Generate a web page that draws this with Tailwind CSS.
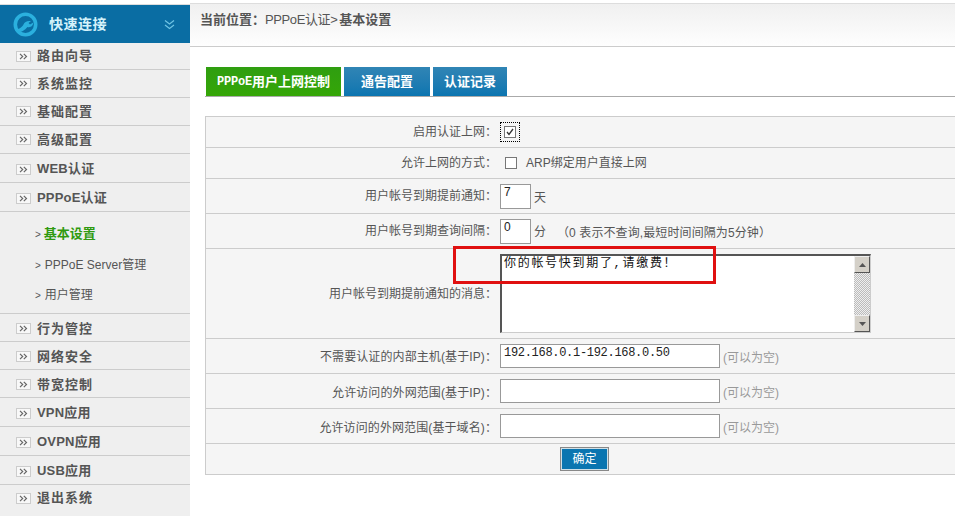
<!DOCTYPE html>
<html lang="zh"><head><meta charset="utf-8"><title>PPPoE</title>
<script src="https://cdn.jsdelivr.net/npm/@tailwindcss/browser@4"></script></head>
<body class="relative w-[955px] h-[516px] overflow-hidden bg-white text-[12px] text-[#555] font-['Liberation_Sans','Noto_Sans_CJK_SC',sans-serif]">
<div class="flex h-[516px]">
<aside class="w-[190px] shrink-0 flex flex-col">
  <div class="h-[5px] bg-white border-b border-[#ddd]"></div>
  <div class="h-[38px] bg-[#0a6da3] flex items-center pl-[13px] pr-[15px]">
    <svg width="25" height="25" viewBox="0 0 25 25" class="shrink-0"><circle cx="12.5" cy="12.5" r="10.2" fill="none" stroke="#2bb0de" stroke-width="3.6"/><path d="M2 18 C7 17 9 15 10.5 12.5 C11.5 10 14 8.5 18 9 L15.5 11 L17 12.5 L20 10.8 C20.5 13.5 17.5 16 14.5 15 C12 18 8 20.5 5 20.5Z" fill="#2bb0de"/></svg>
    <span class="ml-[11px] text-[14px] font-bold text-[#d5f3fb] tracking-[0.5px]">快速连接</span>
    <svg width="11" height="11" viewBox="0 0 11 11" class="ml-auto" fill="none" stroke="#6fc4e4" stroke-width="1.2"><path d="M1 1.5 L5.5 5 L10 1.5M1 6 L5.5 9.5 L10 6"/></svg>
  </div>
  <nav class="flex-1 bg-[#efefef] flex flex-col text-[13px] font-bold text-[#555]">
    <div class="h-[27px] flex items-center border-b border-[#ccc] pl-[16px] gap-[6px]"><svg width="15" height="11" viewBox="0 0 15 11"><rect x=".5" y=".5" width="14" height="10" fill="#f8f8f8" stroke="#ccc"/><path d="M4 2.8 L6.7 5.5 L4 8.2M7.8 2.8 L10.5 5.5 L7.8 8.2" fill="none" stroke="#666" stroke-width="1.2"/></svg><span class="tracking-[1px]">路由向导</span></div>
    <div class="h-[28px] flex items-center border-b border-[#ccc] pl-[16px] gap-[6px]"><svg width="15" height="11" viewBox="0 0 15 11"><rect x=".5" y=".5" width="14" height="10" fill="#f8f8f8" stroke="#ccc"/><path d="M4 2.8 L6.7 5.5 L4 8.2M7.8 2.8 L10.5 5.5 L7.8 8.2" fill="none" stroke="#666" stroke-width="1.2"/></svg><span class="tracking-[1px]">系统监控</span></div>
    <div class="h-[28px] flex items-center border-b border-[#ccc] pl-[16px] gap-[6px]"><svg width="15" height="11" viewBox="0 0 15 11"><rect x=".5" y=".5" width="14" height="10" fill="#f8f8f8" stroke="#ccc"/><path d="M4 2.8 L6.7 5.5 L4 8.2M7.8 2.8 L10.5 5.5 L7.8 8.2" fill="none" stroke="#666" stroke-width="1.2"/></svg><span class="tracking-[1px]">基础配置</span></div>
    <div class="h-[28px] flex items-center border-b border-[#ccc] pl-[16px] gap-[6px]"><svg width="15" height="11" viewBox="0 0 15 11"><rect x=".5" y=".5" width="14" height="10" fill="#f8f8f8" stroke="#ccc"/><path d="M4 2.8 L6.7 5.5 L4 8.2M7.8 2.8 L10.5 5.5 L7.8 8.2" fill="none" stroke="#666" stroke-width="1.2"/></svg><span class="tracking-[1px]">高级配置</span></div>
    <div class="h-[29px] flex items-center border-b border-[#ccc] pl-[16px] pt-[2px] gap-[6px]"><svg width="15" height="11" viewBox="0 0 15 11"><rect x=".5" y=".5" width="14" height="10" fill="#f8f8f8" stroke="#ccc"/><path d="M4 2.8 L6.7 5.5 L4 8.2M7.8 2.8 L10.5 5.5 L7.8 8.2" fill="none" stroke="#666" stroke-width="1.2"/></svg><span class="tracking-[0.2px]">WEB认证</span></div>
    <div class="h-[29px] flex items-center border-b border-[#ccc] pl-[16px] pt-[2px] gap-[6px]"><svg width="15" height="11" viewBox="0 0 15 11"><rect x=".5" y=".5" width="14" height="10" fill="#f8f8f8" stroke="#ccc"/><path d="M4 2.8 L6.7 5.5 L4 8.2M7.8 2.8 L10.5 5.5 L7.8 8.2" fill="none" stroke="#666" stroke-width="1.2"/></svg><span class="tracking-[0.2px]">PPPoE认证</span></div>
    <div class="h-[102px] border-b border-[#ccc] pl-[35px] pt-[7px] flex flex-col text-[12px] font-normal">
      <div class="h-[30px] flex items-center text-[#2f9a10] font-bold text-[13px]"><span class="font-normal text-[#555] text-[10px] mr-[3px]">&gt;</span>基本设置</div>
      <div class="h-[30px] flex items-center pt-[2px]"><span class="text-[10px] mr-[4px]">&gt;</span>PPPoE Server管理</div>
      <div class="h-[30px] flex items-center pt-[2px]"><span class="text-[10px] mr-[4px]">&gt;</span>用户管理</div>
    </div>
    <div class="h-[28px] flex items-center border-b border-[#ccc] pl-[16px] pt-[2px] gap-[6px]"><svg width="15" height="11" viewBox="0 0 15 11"><rect x=".5" y=".5" width="14" height="10" fill="#f8f8f8" stroke="#ccc"/><path d="M4 2.8 L6.7 5.5 L4 8.2M7.8 2.8 L10.5 5.5 L7.8 8.2" fill="none" stroke="#666" stroke-width="1.2"/></svg><span class="tracking-[1px]">行为管控</span></div>
    <div class="h-[28px] flex items-center border-b border-[#ccc] pl-[16px] pt-[2px] gap-[6px]"><svg width="15" height="11" viewBox="0 0 15 11"><rect x=".5" y=".5" width="14" height="10" fill="#f8f8f8" stroke="#ccc"/><path d="M4 2.8 L6.7 5.5 L4 8.2M7.8 2.8 L10.5 5.5 L7.8 8.2" fill="none" stroke="#666" stroke-width="1.2"/></svg><span class="tracking-[1px]">网络安全</span></div>
    <div class="h-[28px] flex items-center border-b border-[#ccc] pl-[16px] pt-[2px] gap-[6px]"><svg width="15" height="11" viewBox="0 0 15 11"><rect x=".5" y=".5" width="14" height="10" fill="#f8f8f8" stroke="#ccc"/><path d="M4 2.8 L6.7 5.5 L4 8.2M7.8 2.8 L10.5 5.5 L7.8 8.2" fill="none" stroke="#666" stroke-width="1.2"/></svg><span class="tracking-[1px]">带宽控制</span></div>
    <div class="h-[29px] flex items-center border-b border-[#ccc] pl-[16px] pt-[2px] gap-[6px]"><svg width="15" height="11" viewBox="0 0 15 11"><rect x=".5" y=".5" width="14" height="10" fill="#f8f8f8" stroke="#ccc"/><path d="M4 2.8 L6.7 5.5 L4 8.2M7.8 2.8 L10.5 5.5 L7.8 8.2" fill="none" stroke="#666" stroke-width="1.2"/></svg><span class="tracking-[0.2px]">VPN应用</span></div>
    <div class="h-[29px] flex items-center border-b border-[#ccc] pl-[16px] pt-[2px] gap-[6px]"><svg width="15" height="11" viewBox="0 0 15 11"><rect x=".5" y=".5" width="14" height="10" fill="#f8f8f8" stroke="#ccc"/><path d="M4 2.8 L6.7 5.5 L4 8.2M7.8 2.8 L10.5 5.5 L7.8 8.2" fill="none" stroke="#666" stroke-width="1.2"/></svg><span class="tracking-[0.2px]">OVPN应用</span></div>
    <div class="h-[29px] flex items-center border-b border-[#ccc] pl-[16px] pt-[2px] gap-[6px]"><svg width="15" height="11" viewBox="0 0 15 11"><rect x=".5" y=".5" width="14" height="10" fill="#f8f8f8" stroke="#ccc"/><path d="M4 2.8 L6.7 5.5 L4 8.2M7.8 2.8 L10.5 5.5 L7.8 8.2" fill="none" stroke="#666" stroke-width="1.2"/></svg><span class="tracking-[0.2px]">USB应用</span></div>
    <div class="h-[28px] flex items-center pl-[16px] pb-[2px] gap-[6px]"><svg width="15" height="11" viewBox="0 0 15 11"><rect x=".5" y=".5" width="14" height="10" fill="#f8f8f8" stroke="#ccc"/><path d="M4 2.8 L6.7 5.5 L4 8.2M7.8 2.8 L10.5 5.5 L7.8 8.2" fill="none" stroke="#666" stroke-width="1.2"/></svg><span class="tracking-[1px]">退出系统</span></div>
  </nav>
</aside>
<main class="flex-1 min-w-0 flex flex-col">
  <div class="h-[4px] bg-white border-b border-[#ddd]"></div>
  <div class="h-[43px] bg-gradient-to-b from-[#f0f0f0] to-[#fefefe] border-b border-[#ccc] pl-[10px] pt-[8px] text-[13px] leading-[16px]"><b>当前位置：</b><span class="tracking-[-0.4px]">PPPoE认证&gt;</span><b class="ml-[2px]">基本设置</b></div>
  <div class="h-[20px]"></div>
  <div class="ml-[15px] pl-[1px] h-[30px] flex items-end gap-[3px] border-b border-[#aaa] text-white font-bold text-[13px]">
    <div class="w-[135px] h-[29px] bg-gradient-to-b from-[#2f9e10] to-[#35a607] flex items-center justify-center"><span class="font-['Liberation_Mono',monospace] text-[12px] tracking-[-0.2px]">PPPoE</span>用户上网控制</div>
    <div class="w-[86px] h-[29px] bg-gradient-to-b from-[#3085b5] to-[#0a75b0] flex items-center justify-center">通告配置</div>
    <div class="w-[74px] h-[29px] bg-gradient-to-b from-[#3085b5] to-[#0a75b0] flex items-center justify-center">认证记录</div>
  </div>
  <div class="h-[19px]"></div>
  <div class="ml-[15px] border-t border-l border-[#ccc] bg-[#f5f5f5] text-[12px]">
    <div class="h-[31px] flex items-center border-b border-[#ccc]"><span class="w-[291px] text-right">启用认证上网：</span><span class="ml-[3px] w-[20px] h-[20px] border border-dotted border-black flex items-center justify-center"><span class="w-[12px] h-[12px] border border-[#777] bg-white flex items-center justify-center"><svg width="8" height="8" viewBox="0 0 8 8"><path d="M1 4 L3 6.5 L7 1" fill="none" stroke="#333" stroke-width="1.3"/></svg></span></span></div>
    <div class="h-[31px] flex items-center border-b border-[#ccc]"><span class="w-[291px] text-right">允许上网的方式：</span><span class="ml-[8px] w-[12px] h-[12px] border border-[#777] bg-white"></span><span class="ml-[9px]">ARP绑定用户直接上网</span></div>
    <div class="h-[35px] flex items-center border-b border-[#ccc]"><span class="w-[291px] text-right">用户帐号到期提前通知：</span><span class="ml-[3px] w-[31px] h-[25px] border border-[#999] bg-white px-[3px] leading-[15px] text-[#222]">7</span><span class="ml-[3px] pt-[3px]">天</span></div>
    <div class="h-[35px] flex items-center border-b border-[#ccc]"><span class="w-[291px] text-right">用户帐号到期查询间隔：</span><span class="ml-[3px] w-[31px] h-[25px] border border-[#999] bg-white px-[3px] leading-[15px] text-[#222]">0</span><span class="ml-[3px] pt-[2px]">分</span><span class="ml-[11px] pt-[3px] tracking-[0.1px]">（0 表示不查询,最短时间间隔为5分钟）</span></div>
    <div class="h-[90px] flex items-center border-b border-[#ccc]"><span class="w-[291px] text-right">用户帐号到期提前通知的消息：</span><div class="ml-[3px] w-[371px] h-[79px] flex border-t-2 border-l-2 border-r border-b border-t-[#555] border-l-[#555] border-r-[#ccc] border-b-[#ccc] bg-white"><div class="flex-1 pl-[2px] pt-[1px] leading-[14px] tracking-[1.7px] text-[#111] font-['Liberation_Mono','Noto_Sans_CJK_SC',monospace]">你的帐号快到期了,请缴费！</div><div class="w-[16px] flex flex-col bg-[repeating-conic-gradient(#bbb_0_25%,#eee_0_50%)] bg-[length:2px_2px]"><div class="h-[17px] bg-[#d4d0c8] border border-t-[#eee] border-l-[#eee] border-r-[#555] border-b-[#555] flex items-center justify-center"><svg width="7" height="4" viewBox="0 0 7 4"><path d="M3.5 0 L7 4 H0Z" fill="#555"/></svg></div><div class="flex-1"></div><div class="h-[17px] bg-[#d4d0c8] border border-t-[#eee] border-l-[#eee] border-r-[#555] border-b-[#555] flex items-center justify-center"><svg width="7" height="4" viewBox="0 0 7 4"><path d="M0 0 H7 L3.5 4Z" fill="#555"/></svg></div></div></div></div>
    <div class="h-[35px] flex items-center border-b border-[#ccc]"><span class="w-[291px] text-right pt-[2px] tracking-[0.1px]">不需要认证的内部主机(基于IP)：</span><span class="ml-[3px] w-[220px] h-[24px] border border-[#999] bg-white px-[3px] leading-[17px] text-[#222] tracking-[-0.3px] font-['Liberation_Mono',monospace]">192.168.0.1-192.168.0.50</span><span class="ml-[3px] pt-[4px] text-[#999]">(可以为空)</span></div>
    <div class="h-[35px] flex items-center border-b border-[#ccc]"><span class="w-[291px] text-right pt-[3px] tracking-[0.1px]">允许访问的外网范围(基于IP)：</span><span class="ml-[3px] w-[220px] h-[24px] border border-[#999] bg-white"></span><span class="ml-[3px] pt-[4px] text-[#999]">(可以为空)</span></div>
    <div class="h-[35px] flex items-center border-b border-[#ccc]"><span class="w-[291px] text-right pt-[3px] tracking-[0.1px]">允许访问的外网范围(基于域名)：</span><span class="ml-[3px] w-[220px] h-[24px] border border-[#999] bg-white"></span><span class="ml-[3px] pt-[4px] text-[#999]">(可以为空)</span></div>
    <div class="h-[31px] flex items-center border-b border-[#ccc]"><span class="ml-[354px] w-[49px] h-[24px] bg-[#0a75b0] border-2 border-[#cfe0e8] outline outline-[#888] -outline-offset-1 text-white flex items-center justify-center">确定</span></div>
  </div>
</main>
</div>
<div class="absolute left-[453px] top-[246px] w-[263px] h-[38px] border-[3px] border-[#e01010]"></div>
</body></html>
